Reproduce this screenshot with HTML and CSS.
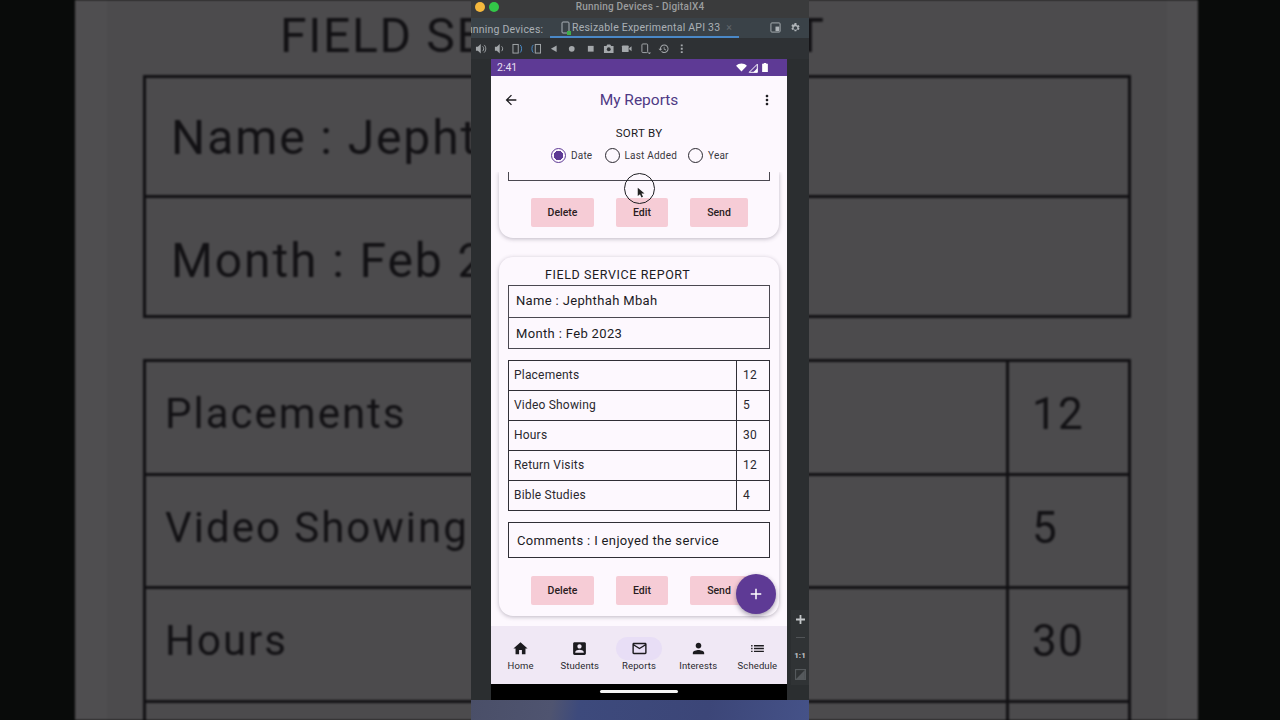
FILE: index.html

```html
<!DOCTYPE html>
<html lang="en">
<head>
    <meta charset="UTF-8">
    <meta name="viewport" content="width=device-width, initial-scale=1.0">
    <title>My Reports</title>
    <link rel="stylesheet" href="styles.css">
</head>
<body>
    <!-- blurred, enlarged copy of the video behind the window -->
    <div class="backdrop">
        <div class="backdrop-card">
            <div class="big-title">FIELD SERVICE REPORT</div>
            <div class="big-box">
                <div class="big-box-row">Name : Jephthah Mbah</div>
                <div class="big-box-row">Month : Feb 2023</div>
            </div>
            <div class="big-table">
                <div class="big-row"><span class="big-label">Placements</span><span class="big-value">12</span></div>
                <div class="big-row"><span class="big-label">Video Showing</span><span class="big-value">5</span></div>
                <div class="big-row"><span class="big-label">Hours</span><span class="big-value">30</span></div>
                <div class="big-row"><span class="big-label">Return Visits</span><span class="big-value">12</span></div>
            </div>
        </div>
    </div>

    <div class="window">
        <div class="titlebar">
            <span class="light light-yellow"></span>
            <span class="light light-green"></span>
            <span class="titlebar-text">Running Devices - DigitalX4</span>
        </div>
        <div class="tabbar">
            <span class="tabbar-label">Running Devices:</span>
            <div class="tab">
                <svg class="tab-icon" viewBox="0 0 12 14"><rect x="2" y="1" width="7" height="11" rx="1" fill="none" stroke="#a9b0b6" stroke-width="1"/><rect x="7" y="10" width="4" height="4" fill="#3fae4a"/></svg>
                <span>Resizable Experimental API 33</span>
                <span class="tab-close">×</span>
            </div>
            <div class="tabbar-tools">
                <svg viewBox="0 0 12 12" width="11" height="11"><rect x="1" y="1" width="10" height="10" rx="1" fill="none" stroke="#aeb3b7"/><rect x="6" y="5" width="4" height="5" fill="#aeb3b7"/></svg>
                <svg viewBox="0 0 24 24" width="12" height="12"><path fill="#aeb3b7" d="M19.14 12.94c.04-.3.06-.61.06-.94s-.02-.64-.07-.94l2.03-1.58-1.92-3.32-2.39.96c-.5-.38-1.03-.7-1.62-.94L14.87 2h-3.84l-.36 2.54c-.59.24-1.13.57-1.62.94l-2.39-.96-1.92 3.32 2.03 1.58c-.05.3-.09.63-.09.94s.02.64.07.94l-2.03 1.58 1.92 3.32 2.39-.96c.5.38 1.03.7 1.62.94l.36 2.54h3.84l.36-2.54c.59-.24 1.13-.56 1.62-.94l2.39.96 1.92-3.32-2.03-1.58zM12.95 15.6c-1.98 0-3.6-1.62-3.6-3.6s1.62-3.6 3.6-3.6 3.6 1.62 3.6 3.6-1.62 3.6-3.6 3.6z"/></svg>
            </div>
        </div>
        <div class="toolbar">
            <svg viewBox="0 0 12 12"><path fill="#a4a8ab" d="M1 4h2l3-3v10L3 8H1z"/><path fill="none" stroke="#a4a8ab" d="M8 3.5c1.4 1.2 1.4 3.8 0 5M9.5 2c2.3 2 2.3 6 0 8"/></svg>
            <svg viewBox="0 0 12 12"><path fill="#a4a8ab" d="M2 4h2l3-3v10L4 8H2z"/><path fill="none" stroke="#a4a8ab" d="M9 3.5c1.4 1.2 1.4 3.8 0 5"/></svg>
            <svg viewBox="0 0 12 12"><rect x="1" y="1.5" width="5.5" height="9" fill="none" stroke="#a4a8ab"/><path fill="none" stroke="#4a8fcf" d="M8.5 2c2 1 2 7 0 8"/></svg>
            <svg viewBox="0 0 12 12"><path fill="none" stroke="#4a8fcf" d="M3.5 2c-2 1-2 7 0 8"/><rect x="5.5" y="1.5" width="5.5" height="9" fill="none" stroke="#a4a8ab"/></svg>
            <svg viewBox="0 0 12 12"><path fill="#a4a8ab" d="M9 2.5v7L3 6z"/></svg>
            <svg viewBox="0 0 12 12"><circle cx="6" cy="6" r="3" fill="#a4a8ab"/></svg>
            <svg viewBox="0 0 12 12"><rect x="3" y="3" width="6" height="6" fill="#a4a8ab"/></svg>
            <svg viewBox="0 0 12 12"><path fill="#a4a8ab" d="M1 3h2.500l1-1.500h3l1 1.500H11v7.500H1z"/><circle cx="6" cy="6.500" r="2" fill="#2e3134"/></svg>
            <svg viewBox="0 0 12 12"><rect x="1" y="2.500" width="7" height="7" rx="1" fill="#a4a8ab"/><path fill="#a4a8ab" d="M8.500 5.500l2.500-2v5l-2.500-2z"/></svg>
            <svg viewBox="0 0 12 12"><rect x="2" y="1" width="6" height="9" rx="1" fill="none" stroke="#a4a8ab"/><path fill="#a4a8ab" d="M8 10h3.500l-1.750 1.800z"/></svg>
            <svg viewBox="0 0 24 24"><path fill="#a4a8ab" d="M13 3c-4.970 0-9 4.030-9 9H1l4 4 4-4H6c0-3.870 3.130-7 7-7s7 3.130 7 7-3.130 7-7 7c-1.930 0-3.680-.79-4.940-2.060l-1.420 1.420C8.270 19.990 10.510 21 13 21c4.970 0 9-4.030 9-9s-4.030-9-9-9zm-1 5v5l4.250 2.520.77-1.280-3.520-2.090V8z"/></svg>
            <svg viewBox="0 0 12 12"><path fill="#a4a8ab" d="M5 1.500h2v2H5zM5 5h2v2H5zM5 8.500h2v2H5z"/></svg>
        </div>

        <div class="device-row">
            <div class="phone">
                <div class="statusbar">
                    <span>2:41</span>
                    <div class="status-icons">
                        <svg viewBox="0 0 12 10" width="11" height="9"><path fill="#fff" d="M0 3c3.300-3.300 8.700-3.300 12 0L6 9.500z"/></svg>
                        <svg class="status-signal" viewBox="0 0 10 10" width="10" height="10"><path fill="none" stroke="#fff" d="M1.200 9.300 9.300 1.200v8.100z"/><path fill="#fff" d="M5 9.500 9.500 5v4.500z"/></svg>
                        <svg viewBox="0 0 7 11" width="6" height="9"><path fill="#fff" d="M2 0h3v1h2v10H0V1h2z"/></svg>
                    </div>
                </div>

                <div class="appbar">
                    <svg class="icon" viewBox="0 0 24 24"><path d="M20 11H7.830l5.590-5.590L12 4l-8 8 8 8 1.410-1.410L7.830 13H20v-2z"/></svg>
                    <span class="appbar-title">My Reports</span>
                    <svg class="icon" viewBox="0 0 24 24"><path d="M12 8c1.100 0 2-.9 2-2s-.9-2-2-2-2 .9-2 2 .9 2 2 2zm0 2c-1.100 0-2 .9-2 2s.9 2 2 2 2-.9 2-2-.9-2-2-2zm0 6c-1.100 0-2 .9-2 2s.9 2 2 2 2-.9 2-2-.9-2-2-2z"/></svg>
                </div>

                <div class="sort">
                    <div class="sort-title">SORT BY</div>
                    <div class="sort-options">
                        <span class="radio radio-on"></span><span class="radio-label radio-label-date">Date</span>
                        <span class="radio"></span><span class="radio-label radio-label-last">Last Added</span>
                        <span class="radio"></span><span class="radio-label">Year</span>
                    </div>
                </div>

                <div class="list">
                    <div class="card card-cut">
                        <div class="cut-box"></div>
                        <div class="actions">
                            <button class="btn btn-delete">Delete</button>
                            <button class="btn btn-edit">Edit</button>
                            <button class="btn btn-send">Send</button>
                        </div>
                    </div>

                    <div class="card">
                        <div class="card-title">FIELD SERVICE REPORT</div>
                        <div class="info-box">
                            <div class="info-row">Name : Jephthah Mbah</div>
                            <div class="info-row">Month : Feb 2023</div>
                        </div>
                        <div class="stats">
                            <div class="stat-row"><span class="stat-label">Placements</span><span class="stat-value">12</span></div>
                            <div class="stat-row"><span class="stat-label">Video Showing</span><span class="stat-value">5</span></div>
                            <div class="stat-row"><span class="stat-label">Hours</span><span class="stat-value">30</span></div>
                            <div class="stat-row"><span class="stat-label">Return Visits</span><span class="stat-value">12</span></div>
                            <div class="stat-row"><span class="stat-label">Bible Studies</span><span class="stat-value">4</span></div>
                        </div>
                        <div class="comments">Comments : I enjoyed the service</div>
                        <div class="actions">
                            <button class="btn btn-delete">Delete</button>
                            <button class="btn btn-edit">Edit</button>
                            <button class="btn btn-send">Send</button>
                        </div>
                    </div>
                </div>

                <div class="bottomnav">
                    <div class="nav-item">
                        <span class="nav-icon"><svg class="icon" viewBox="0 0 24 24"><path d="M10 20v-6h4v6h5v-8h3L12 3 2 12h3v8z"/></svg></span>
                        <span class="nav-label">Home</span>
                    </div>
                    <div class="nav-item">
                        <span class="nav-icon"><svg class="icon" viewBox="0 0 24 24"><path d="M3 5v14c0 1.100.89 2 2 2h14c1.100 0 2-.9 2-2V5c0-1.100-.9-2-2-2H5c-1.110 0-2 .9-2 2zm12 4c0 1.660-1.340 3-3 3s-3-1.340-3-3 1.340-3 3-3 3 1.340 3 3zm-9 8c0-2 4-3.100 6-3.100s6 1.100 6 3.100v1H6v-1z"/></svg></span>
                        <span class="nav-label">Students</span>
                    </div>
                    <div class="nav-item">
                        <span class="nav-icon nav-icon-active"><svg class="icon" viewBox="0 0 24 24"><path d="M20 4H4c-1.100 0-1.990.9-1.990 2L2 18c0 1.100.9 2 2 2h16c1.100 0 2-.9 2-2V6c0-1.100-.9-2-2-2zm0 14H4V8l8 5 8-5v10zm-8-7L4 6h16l-8 5z"/></svg></span>
                        <span class="nav-label">Reports</span>
                    </div>
                    <div class="nav-item">
                        <span class="nav-icon"><svg class="icon" viewBox="0 0 24 24"><path d="M12 12c2.210 0 4-1.790 4-4s-1.790-4-4-4-4 1.790-4 4 1.790 4 4 4zm0 2c-2.670 0-8 1.340-8 4v2h16v-2c0-2.660-5.330-4-8-4z"/></svg></span>
                        <span class="nav-label">Interests</span>
                    </div>
                    <div class="nav-item">
                        <span class="nav-icon"><svg class="icon" viewBox="0 0 24 24"><path d="M3 13h2v-2H3v2zm0 4h2v-2H3v2zm0-8h2V7H3v2zm4 4h14v-2H7v2zm0 4h14v-2H7v2zM7 7v2h14V7H7z"/></svg></span>
                        <span class="nav-label">Schedule</span>
                    </div>
                </div>

                <div class="gesturebar"><span class="gesture-pill"></span></div>

                <!-- these two float over the list -->
                <div class="fab">
                    <svg viewBox="0 0 24 24" width="18" height="18"><path fill="#fff" d="M19 13h-6v6h-2v-6H5v-2h6V5h2v6h6v2z"/></svg>
                </div>
                <div class="touch">
                    <svg viewBox="0 0 12 16" width="9" height="12"><path fill="#222" d="M1 1v11l3-2.500 2 4.500 2-1-2-4.300h4z"/></svg>
                </div>
            </div>

            <div class="zoom-panel">
                <svg viewBox="0 0 10 10" width="9" height="9"><path fill="#c4c7c9" d="M4 0h2v4h4v2H6v4H4V6H0V4h4z"/></svg>
                <svg viewBox="0 0 10 10" width="9" height="9"><rect y="4.500" width="10" height="1" fill="#55595c"/></svg>
                <span class="zoom-text">1:1</span>
                <svg viewBox="0 0 10 10" width="11" height="11"><rect x=".5" y=".5" width="9" height="9" fill="none" stroke="#55595c"/><path fill="#55595c" d="M1 9l8-8v8z"/></svg>
            </div>
        </div>

        <div class="wallpaper"></div>
    </div>
</body>
</html>
```

FILE: styles.css

```css
* {
  box-sizing: border-box;
}

body {
  margin: 0;
  width: 1280px;
  height: 720px;
  overflow: hidden;
  position: relative;
  background-color: #090b0a;
  font-family: Roboto, "Liberation Sans", sans-serif;
}

/* backdrop */
.backdrop {
  width: 1123px;
  height: 720px;
  margin-left: 75px;
  padding: 0 31px 0 32px;
  background-color: #4f4e50;
  overflow: hidden;
  filter: blur(0.8px);
}

.backdrop-card {
  height: 720px;
  padding: 0 36px;
  background-color: #4c4b4d;
  color: #121114;
}

.big-title {
  height: 75px;
  padding: 10px 0 0 137px;
  font-size: 48px;
  line-height: 52px;
  letter-spacing: 1.7px;
  white-space: nowrap;
}

.big-box {
  width: 988px;
  height: 243px;
  border: 3px solid #121114;
}

.big-box-row {
  height: 117px;
  padding: 32px 0 0 25px;
  font-size: 48px;
  line-height: 56px;
  letter-spacing: 1.9px;
}

.big-box-row + .big-box-row {
  height: 120px;
  padding-top: 35px;
  border-top: 3px solid #121114;
}

.big-table {
  width: 988px;
  margin-top: 41px;
  border: 3px solid #121114;
  border-bottom: none;
}

.big-row {
  display: flex;
  height: 113.5px;
  border-bottom: 3px solid #121114;
  font-size: 42px;
  line-height: 50px;
  letter-spacing: 2px;
}

.big-label {
  width: 863px;
  padding: 27px 0 0 19px;
  border-right: 3px solid #121114;
}

.big-value {
  padding: 27px 0 0 23px;
  font-size: 44px;
  letter-spacing: 1.3px;
}

/* window */
.window {
  position: absolute;
  left: 471px;
  top: 0;
  width: 338px;
  height: 720px;
  display: flex;
  flex-direction: column;
  background-color: #2b2e30;
}

.titlebar {
  height: 18px;
  position: relative;
  display: flex;
  align-items: flex-start;
  gap: 4px;
  padding: 2px 0 0 4px;
  background-color: #3a3b3c;
}

.light {
  width: 10px;
  height: 10px;
  border-radius: 50%;
}

.light-yellow {
  background-color: #f5b83d;
}

.light-green {
  background-color: #33c748;
}

.titlebar-text {
  position: absolute;
  left: 0;
  right: 0;
  top: 0;
  text-align: center;
  font-size: 10px;
  line-height: 14px;
  font-weight: 500;
  letter-spacing: 0.2px;
  color: #9b9d9e;
}

.tabbar {
  height: 20px;
  display: flex;
  align-items: center;
  position: relative;
  overflow: hidden;
  background-color: #3a4248;
  font-size: 10.5px;
  letter-spacing: 0.22px;
  color: #aab0b5;
}

.tabbar-label {
  margin-left: -11px;
  width: 90px;
  flex-shrink: 0;
  padding-top: 2px;
  white-space: nowrap;
}

.tab {
  width: 189px;
  height: 20px;
  display: flex;
  align-items: center;
  padding: 1px 0 0 10px;
  border-bottom: 2px solid #4a88c7;
  white-space: nowrap;
}

.tab-icon {
  width: 12px;
  height: 14px;
}

.tab-close {
  margin-left: 6px;
  color: #62686d;
}

.tabbar-tools {
  display: flex;
  gap: 8px;
  margin-left: 31px;
}

.toolbar {
  height: 21px;
  display: flex;
  align-items: center;
  gap: 6.8px;
  padding-left: 4px;
  background-color: #2e3134;
}

.toolbar svg {
  width: 11.5px;
  height: 11.5px;
  flex-shrink: 0;
}

.device-row {
  height: 641px;
  display: flex;
  padding-left: 20px;
}

/* phone */
.phone {
  width: 296px;
  height: 641px;
  position: relative;
  display: flex;
  flex-direction: column;
  background-color: #fdf8fe;
  color: #1c1b1f;
}

.statusbar {
  height: 17px;
  flex-shrink: 0;
  display: flex;
  align-items: center;
  justify-content: space-between;
  padding: 0 19px 0 6px;
  background-color: #5e3a95;
  color: #e6deef;
  font-size: 10.5px;
}

.status-icons {
  display: flex;
  align-items: center;
  gap: 1px;
}

.status-signal {
  margin-right: 3px;
}

.appbar {
  height: 47px;
  flex-shrink: 0;
  display: flex;
  align-items: center;
  justify-content: space-between;
  padding: 0 12px;
}

.icon {
  width: 16px;
  height: 16px;
  fill: #1c1b1f;
}

.appbar-title {
  font-size: 15.5px;
  color: #4f3a85;
}

.sort {
  height: 49px;
  flex-shrink: 0;
  text-align: center;
}

.sort-title {
  padding-top: 2px;
  height: 20px;
  font-size: 11.5px;
  line-height: 16px;
  letter-spacing: 0.3px;
}

.sort-options {
  display: flex;
  align-items: center;
  height: 24px;
  padding-left: 60px;
  font-size: 10px;
  letter-spacing: 0.2px;
  color: #3a383f;
  text-align: left;
}

.radio {
  width: 15px;
  height: 15px;
  flex-shrink: 0;
  border-radius: 50%;
  border: 1.5px solid #2a2830;
}

.radio-on {
  border-color: #5e3a95;
  background: radial-gradient(circle, #5e3a95 0 4.5px, transparent 5px);
}

.radio-label {
  margin-left: 5px;
}

.radio-label-date {
  width: 33.5px;
}

.radio-label-last {
  width: 63.5px;
}

.list {
  flex: 1;
  min-height: 0;
  overflow: hidden;
  padding: 0 8px;
}

.card {
  height: 359px;
  margin-bottom: 19px;
  padding: 10px 9px 0;
  border-radius: 14px;
  background-color: #fdf8fe;
  box-shadow: 0 1px 4px rgba(60, 50, 70, 0.32);
}

.card-cut {
  height: 66px;
  padding-top: 0;
  border-radius: 0 0 14px 14px;
}

.cut-box {
  height: 9px;
  border: 1px solid #4a4850;
  border-top: none;
}

.actions {
  display: flex;
  gap: 22px;
  margin-top: 17px;
  padding-left: 23px;
}

.comments + .actions {
  margin-top: 18px;
}

.btn {
  height: 29px;
  padding: 0;
  border: none;
  border-radius: 2px;
  background-color: #f6ccd6;
  font-family: inherit;
  font-size: 10.5px;
  font-weight: 500;
  color: #2a1c22;
}

.btn-delete {
  width: 63px;
}

.btn-edit {
  width: 52px;
}

.btn-send {
  width: 58px;
}

.card-title {
  height: 18px;
  padding-left: 37px;
  font-size: 12.5px;
  line-height: 16px;
  letter-spacing: 0.6px;
}

.info-box {
  height: 64px;
  border: 1px solid #4a4850;
}

.info-row {
  height: 31px;
  padding-left: 7px;
  font-size: 13px;
  line-height: 30px;
  letter-spacing: 0.35px;
}

.info-row + .info-row {
  border-top: 1px solid #4a4850;
  line-height: 32px;
}

.stats {
  margin-top: 11px;
  border: 1px solid #302e36;
  border-bottom: none;
}

.stat-row {
  display: flex;
  height: 30px;
  border-bottom: 1px solid #302e36;
  font-size: 12px;
  line-height: 28px;
  letter-spacing: 0.2px;
  color: #2a282e;
}

.stat-label {
  width: 228px;
  padding-left: 5px;
  border-right: 1px solid #302e36;
}

.stat-value {
  padding-left: 6px;
}

.comments {
  height: 36px;
  margin-top: 11px;
  padding-left: 8px;
  border: 1px solid #302e36;
  font-size: 13px;
  line-height: 36px;
  letter-spacing: 0.35px;
}

.bottomnav {
  height: 58px;
  flex-shrink: 0;
  display: flex;
  padding-top: 11px;
  background-color: #f0e8f5;
}

.nav-item {
  flex: 1;
  display: flex;
  flex-direction: column;
  align-items: center;
}

.nav-icon {
  width: 46px;
  height: 23px;
  display: flex;
  align-items: center;
  justify-content: center;
  border-radius: 12px;
}

.nav-icon .icon {
  width: 17px;
  height: 17px;
}

.nav-icon-active {
  background-color: #e8def6;
}

.nav-label {
  margin-top: -1px;
  font-size: 9.5px;
  line-height: 14px;
  letter-spacing: 0.1px;
  color: #2a282e;
}

.gesturebar {
  height: 16px;
  flex-shrink: 0;
  display: flex;
  align-items: center;
  justify-content: center;
  background-color: #000;
}

.gesture-pill {
  width: 78px;
  height: 3px;
  margin-bottom: 1px;
  border-radius: 2px;
  background-color: #f4f4f4;
}

.fab {
  position: absolute;
  left: 245px;
  top: 515px;
  width: 40px;
  height: 40px;
  display: flex;
  align-items: center;
  justify-content: center;
  border-radius: 50%;
  background-color: #5e3a95;
  box-shadow: 0 2px 5px rgba(30, 20, 50, 0.4);
}

.touch {
  position: absolute;
  left: 133px;
  top: 114px;
  width: 31px;
  height: 31px;
  padding: 13px 0 0 12px;
  border: 1px solid #1e1e22;
  border-radius: 50%;
}

.touch svg {
  display: block;
}

.zoom-panel {
  width: 18px;
  height: 75px;
  margin: 551px 0 0 4px;
  display: flex;
  flex-direction: column;
  align-items: center;
  justify-content: space-around;
  background-color: #303335;
}

.zoom-text {
  font-size: 8px;
  font-weight: 700;
  color: #c4c7c9;
}

.wallpaper {
  flex: 1;
  background: linear-gradient(100deg, #4a4f68 0%, #4f5470 24%, #3d4a7c 32%, #3c4678 70%, #455288 100%);
}
```
